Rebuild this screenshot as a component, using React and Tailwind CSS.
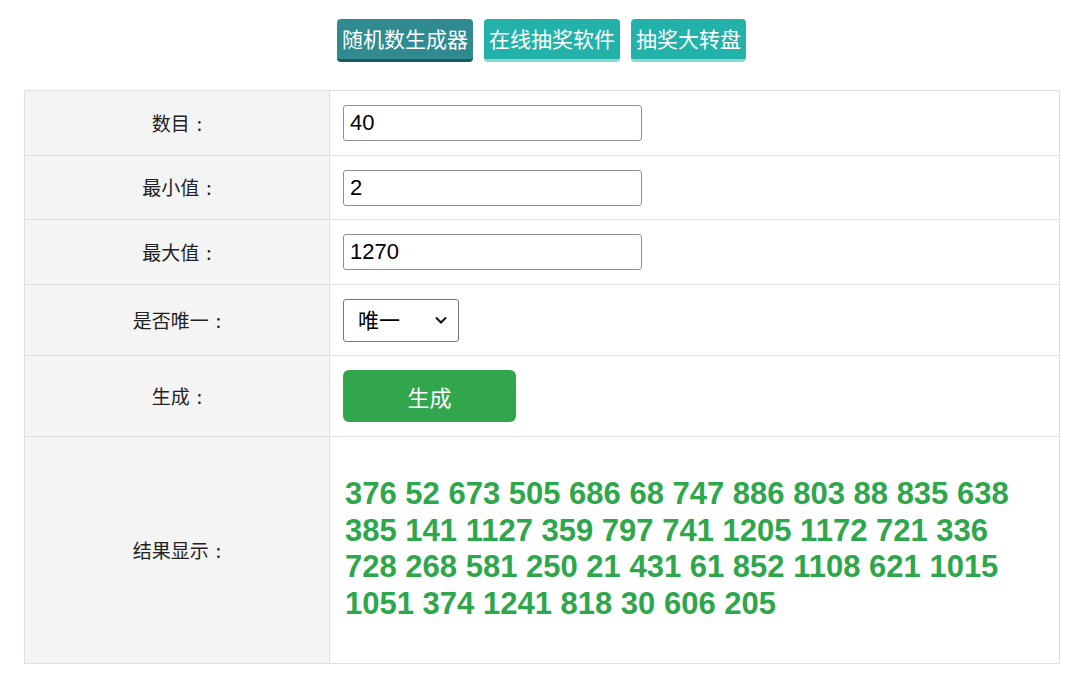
import { useState } from "react";

const cjk = { fontFamily: '"Noto Sans CJK SC", "Liberation Sans", sans-serif' };

const numbers = [
  376, 52, 673, 505, 686, 68, 747, 886, 803, 88, 835, 638, 385, 141, 1127, 359, 797, 741, 1205,
  1172, 721, 336, 728, 268, 581, 250, 21, 431, 61, 852, 1108, 621, 1015, 1051, 374, 1241, 818,
  30, 606, 205,
];

function Label({ text }) {
  return (
    <div className="w-[305px] shrink-0 bg-[#f4f4f4] border-r border-[#d9e1df] flex items-center justify-center text-[19px] text-[#222]">
      {text}
      <span className="ml-[7px]">:</span>
    </div>
  );
}

export default function App() {
  const [count, setCount] = useState("40");
  const [min, setMin] = useState("2");
  const [max, setMax] = useState("1270");

  return (
    <div className="min-h-screen bg-white pt-[19px]" style={cjk}>
      {/* Nav buttons */}
      <div className="flex justify-center gap-[11px] pl-[3px]">
        <button className="h-[43px] px-[5px] rounded-[4px] bg-[#2f8b90] text-white text-[21px] border-b-[3px] border-[#1d5a5e]">
          随机数生成器
        </button>
        <button className="h-[43px] px-[5px] rounded-[4px] bg-[#22b2aa] text-white text-[21px] border-b-[3px] border-[#8ad8d3]">
          在线抽奖软件
        </button>
        <button className="h-[43px] px-[5px] rounded-[4px] bg-[#22b2aa] text-white text-[21px] border-b-[3px] border-[#8ad8d3]">
          抽奖大转盘
        </button>
      </div>

      {/* Form table */}
      <div className="mx-[24px] mt-[28px] w-[1036px] border border-[#d9e1df]">
        <div className="flex h-[65px] border-b border-[#d9e1df]">
          <Label text="数目" />
          <div className="flex-1 flex items-center pl-[13px]">
            <input
              value={count}
              onChange={(e) => setCount(e.target.value)}
              className="w-[299px] h-[36px] border border-[#8f8f8f] rounded-[3px] px-[6px] text-[22px] text-black outline-none"
              style={{ fontFamily: '"Liberation Sans", Arial, sans-serif' }}
            />
          </div>
        </div>
        <div className="flex h-[64px] border-b border-[#d9e1df]">
          <Label text="最小值" />
          <div className="flex-1 flex items-center pl-[13px]">
            <input
              value={min}
              onChange={(e) => setMin(e.target.value)}
              className="w-[299px] h-[36px] border border-[#8f8f8f] rounded-[3px] px-[6px] text-[22px] text-black outline-none"
              style={{ fontFamily: '"Liberation Sans", Arial, sans-serif' }}
            />
          </div>
        </div>
        <div className="flex h-[65px] border-b border-[#d9e1df]">
          <Label text="最大值" />
          <div className="flex-1 flex items-center pl-[13px]">
            <input
              value={max}
              onChange={(e) => setMax(e.target.value)}
              className="w-[299px] h-[36px] border border-[#8f8f8f] rounded-[3px] px-[6px] text-[22px] text-black outline-none"
              style={{ fontFamily: '"Liberation Sans", Arial, sans-serif' }}
            />
          </div>
        </div>
        <div className="flex h-[71px] border-b border-[#d9e1df]">
          <Label text="是否唯一" />
          <div className="flex-1 flex items-center pl-[13px]">
            <div className="relative w-[116px] h-[43px] border border-[#767676] rounded-[3px] bg-white flex items-center pl-[14px] text-[21px] text-black">
              唯一
              <svg className="absolute right-[10px] top-[15px]" width="14" height="10" viewBox="0 0 14 10" fill="none" stroke="#111" strokeWidth="2">
                <path d="M2 2.5 L7 7.5 L12 2.5" />
              </svg>
            </div>
          </div>
        </div>
        <div className="flex h-[81px] border-b border-[#d9e1df]">
          <Label text="生成" />
          <div className="flex-1 flex items-center pl-[13px]">
            <button className="w-[173px] h-[52px] rounded-[6px] bg-[#32a64d] text-white text-[22px]">
              生成
            </button>
          </div>
        </div>
        <div className="flex h-[226px]">
          <Label text="结果显示" />
          <div className="flex-1 pl-[15px] pr-[14px] pt-[39px]">
            <p
              className="text-[31px] leading-[36.5px] font-bold text-[#2ea64b]"
              style={{ fontFamily: '"Liberation Sans", Arial, sans-serif' }}
            >
              {numbers.join(" ")}
            </p>
          </div>
        </div>
      </div>
    </div>
  );
}
